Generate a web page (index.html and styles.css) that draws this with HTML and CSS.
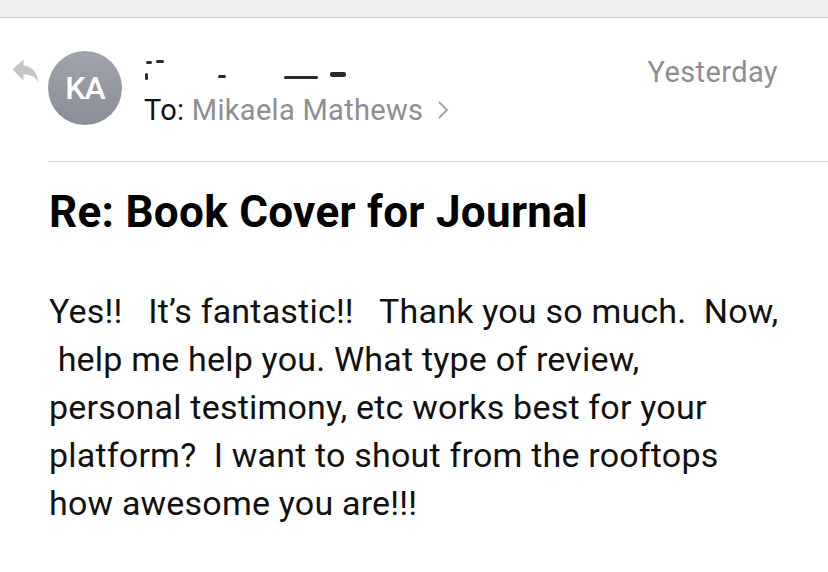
FILE: index.html
```html
<!DOCTYPE html>
<html lang="en">

<head>
  <meta charset="UTF-8">
  <meta name="viewport" content="width=device-width, initial-scale=1.0">
  <title>Re: Book Cover for Journal</title>
  <link rel="stylesheet" href="styles.css">
</head>

<body>
  <div class="topbar"></div>

  <div class="message">
    <div class="header">
      <svg class="reply-icon" viewBox="0 0 27 24" width="27" height="24">
        <path d="M0.5 10.5 L11.5 0.5 L11.5 6.5 C19 7 25 12 26.5 23.5 C23 17.5 18.5 15.5 11.5 15.5 L11.5 21.5 Z" fill="#c4c4c6"/>
      </svg>
      <div class="avatar">KA</div>
      <div class="meta">
        <div class="sender">
          <span class="scrib s1"></span><span class="scrib s2"></span><span class="scrib s3"></span><span class="scrib s4"></span><span class="scrib s5"></span><span class="scrib s6"></span>
        </div>
        <div class="recipient">
          To: <span class="recipient-name">Mikaela Mathews</span>
          <svg class="chevron" viewBox="0 0 12 20" width="12" height="20">
            <polyline points="2,2 10,10 2,18" fill="none" stroke="#a4a4a8" stroke-width="2"/>
          </svg>
        </div>
      </div>
      <div class="date">Yesterday</div>
    </div>

    <h1 class="subject">Re: Book Cover for Journal</h1>

    <div class="body-text">Yes!!   It’s fantastic!!   Thank you so much.  Now,
 help me help you. What type of review,
personal testimony, etc works best for your
platform?  I want to shout from the rooftops
how awesome you are!!!</div>
  </div>
</body>

</html>
```

FILE: styles.css
```css
body {
  font-family: Roboto, 'Liberation Sans', Arial, sans-serif;
  margin: 0;
  background-color: white;
  color: #000;
}

.topbar {
  height: 17px;
  background-color: #efeff1;
  border-bottom: 1px solid #c8c8cc;
}

.header {
  display: flex;
  align-items: flex-start;
  position: relative;
  height: 110px;
  margin-left: 48px;
  padding: 33px 50px 0 0;
  border-bottom: 1px solid #d4d4d6;
}

.reply-icon {
  position: absolute;
  left: -36px;
  top: 41px;
}

.avatar {
  width: 74px;
  height: 74px;
  border-radius: 50%;
  background: linear-gradient(#9fa3ac, #8a8e98);
  color: white;
  font-size: 32px;
  font-weight: 500;
  letter-spacing: -1px;
  display: flex;
  align-items: center;
  justify-content: center;
  flex-shrink: 0;
}

.meta {
  margin-left: 22px;
  flex-grow: 1;
}

.sender {
  position: relative;
  height: 30px;
}

.scrib {
  position: absolute;
  height: 3px;
  background-color: #2a2a2a;
  border-radius: 2px;
}

.s1 { left: 2px; top: 10px; width: 6px; }
.s2 { left: 12px; top: 9px; width: 8px; }
.s3 { left: 1px; top: 22px; width: 3px; height: 7px; }
.s4 { left: 74px; top: 24px; width: 8px; }
.s5 { left: 140px; top: 25px; width: 34px; }
.s6 { left: 186px; top: 21px; width: 16px; height: 5px; }

.recipient {
  font-size: 29px;
  letter-spacing: 0.3px;
  color: #111;
  margin-top: 12px;
}

.recipient-name {
  color: #8e8e93;
}

.chevron {
  margin-left: 6px;
}

.date {
  font-size: 29px;
  letter-spacing: 0.4px;
  color: #8e8e93;
  padding-top: 4px;
}

.subject {
  margin: 0;
  padding: 24px 0 0 49px;
  font-size: 44px;
  font-weight: bold;
  letter-spacing: 0.3px;
  line-height: 52px;
}

.body-text {
  padding: 49px 40px 0 49px;
  font-size: 34px;
  line-height: 48px;
  letter-spacing: 0.2px;
  white-space: pre-wrap;
  color: #111;
}
```
